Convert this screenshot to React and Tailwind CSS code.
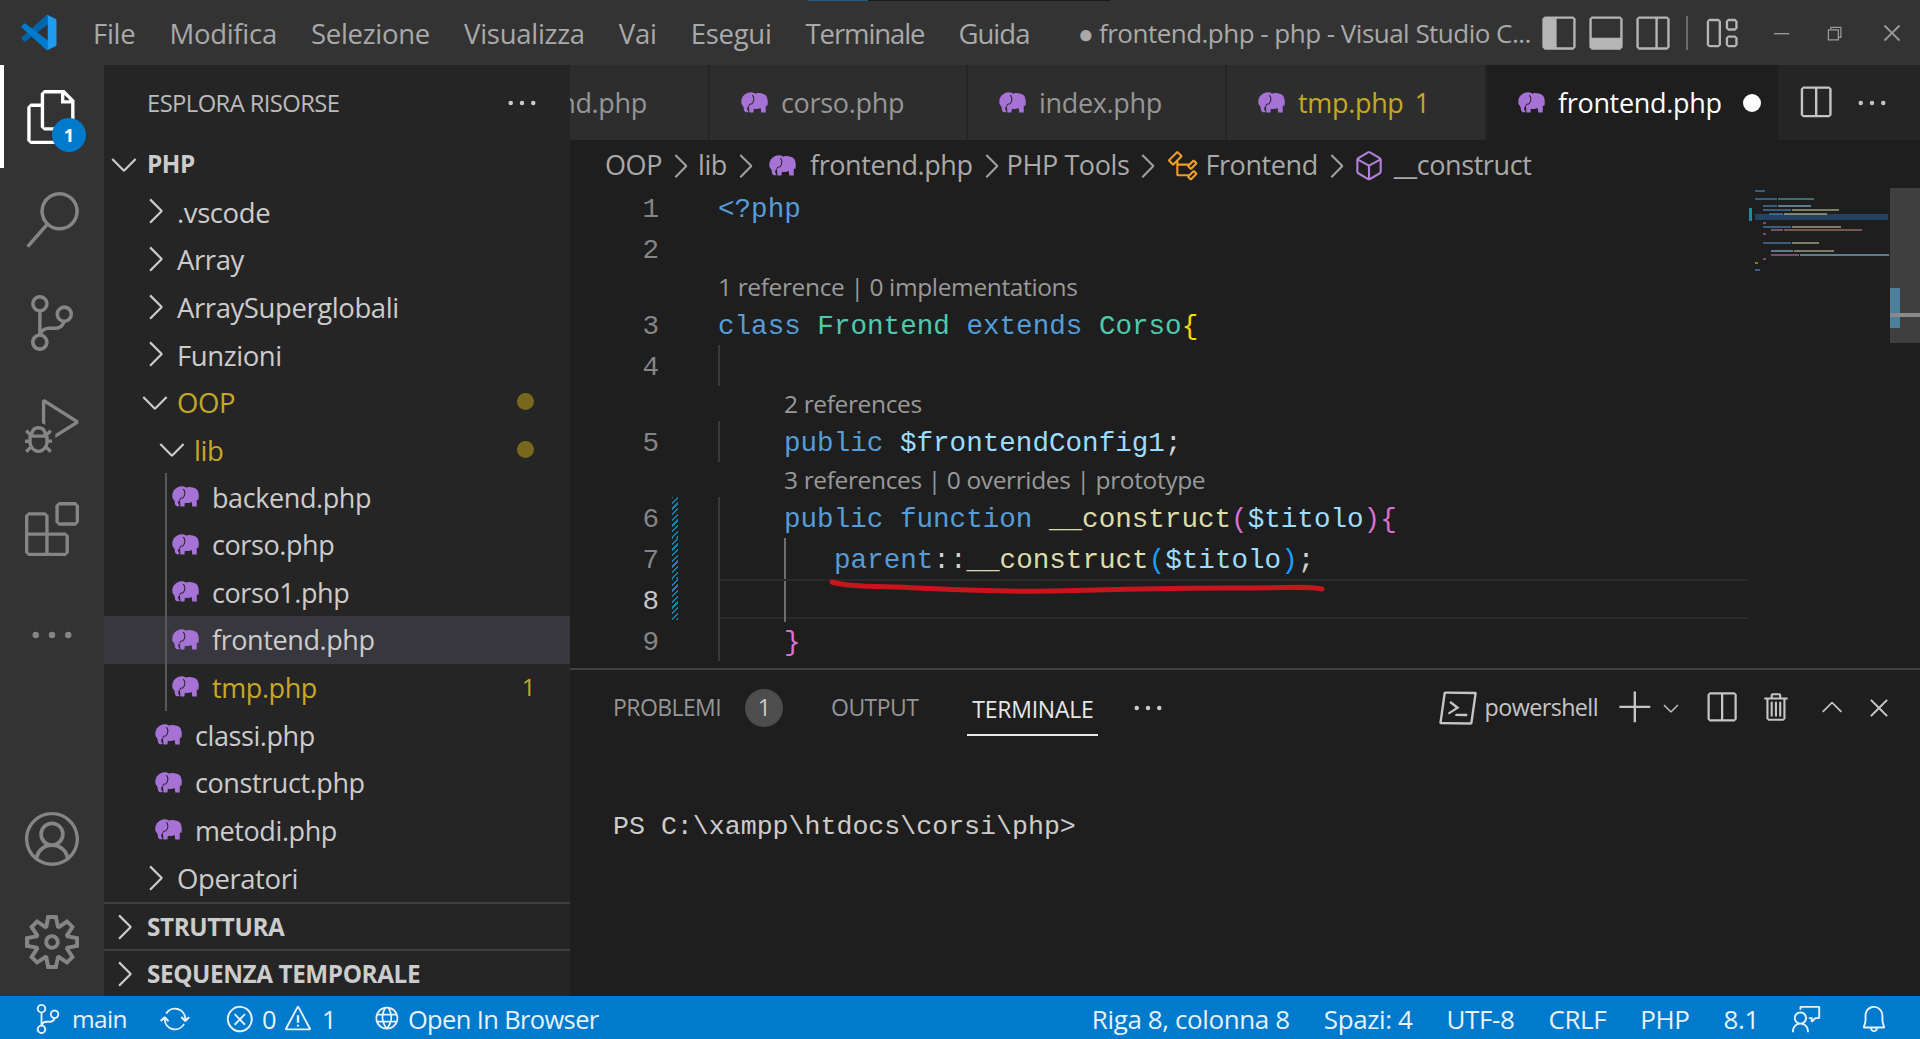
import {
  VscFiles, VscSearch, VscSourceControl, VscDebugAlt, VscExtensions, VscEllipsis, VscAccount, VscSettingsGear,
  VscChevronRight, VscChevronDown, VscSplitHorizontal, VscLayoutSidebarLeft, VscLayoutPanel, VscLayoutSidebarRightOff,
  VscLayout, VscChromeMinimize, VscChromeRestore, VscChromeClose, VscTerminalPowershell, VscAdd, VscTrash, VscChevronUp,
  VscSync, VscError, VscWarning, VscGlobe, VscBell, VscFeedback, VscSymbolClass, VscSymbolMethod,
} from 'react-icons/vsc'

const Elephant = ({ className = 'w-[27px] h-[22px]' }) => (
  <svg viewBox="0 0 24 19" className={className}>
    <path fill="#a672d6" d="M5 .8C8-.5 11-.2 12.5 1.3 14 .3 20 .3 22.5 3.3 24 6 24 9 23.5 12L22 12 22 18 18 18 17.5 14C15.5 15 13 15 11.5 14.5L11 18 7.5 18 7 12C6 13 5.5 13 5.5 15 5.5 16.5 7 16 6.5 17.5 4.5 18.5 2.500 17 2.500 14.5 2.500 12.500 1.500 12 .5 10.500-.5 6 1.500 2.500 5 .8Z" />
    <path fill="none" stroke="#252526" strokeWidth=".9" d="M10 2.500C12 4.500 12 8 9.500 10.500M7 12C7.500 10.500 8.500 10 9.500 10.500" />
  </svg>
)

const Logo = () => (
  <svg viewBox="0 0 100 100" className="w-[36px] h-[35px]">
    <path fill="#0065a9" d="M96.4614 10.7962L75.8569 0.875542C73.4719 -0.272773 70.6217 0.211611 68.75 2.08333L1.29858 63.5832C-0.515693 65.2373 -0.513607 68.0937 1.30308 69.7452L6.81272 74.754C8.29793 76.1042 10.5347 76.2036 12.1338 74.9905L93.3609 13.3699C96.086 11.3026 100 13.2462 100 16.6667V16.4275C100 14.0265 98.6246 11.8378 96.4614 10.7962Z" />
    <path fill="#007acc" d="M96.4614 89.2038L75.8569 99.1245C73.4719 100.273 70.6217 99.7884 68.75 97.9167L1.29858 36.4168C-0.515693 34.7627 -0.513607 31.9063 1.30308 30.2548L6.81272 25.246C8.29793 23.8958 10.5347 23.7964 12.1338 25.0095L93.3609 86.6301C96.086 88.6974 100 86.7538 100 83.3333V83.5725C100 85.9735 98.6246 88.1622 96.4614 89.2038Z" />
    <path fill="#1f9cf0" d="M75.8578 99.1263C73.4721 100.274 70.6219 99.7885 68.75 97.9166C71.0564 100.223 75 98.5895 75 95.3278V4.67213C75 1.41039 71.0564 -0.223106 68.75 2.08329C70.6219 0.211402 73.4721 -0.273666 75.8578 0.873633L96.4587 10.7807C98.6234 11.8217 100 14.0112 100 16.4132V83.5871C100 85.9891 98.6234 88.1786 96.4586 89.2196L75.8578 99.1263Z" />
  </svg>
)

const TitleBar = () => (
  <header className="relative h-[65px] shrink-0 bg-[#333333] flex items-center text-[#a9a9a9]">
    <div className="absolute top-0 left-[808px] h-[1px] w-[60px] bg-[#1f5c8a]" />
    <div className="absolute top-0 left-[868px] h-[1px] w-[242px] bg-[#1a1a1a]" />
    <div className="ml-[21px] mr-[36px] shrink-0"><Logo /></div>
    <nav className="w-[985px] shrink-0 flex gap-[34px] text-[27.5px] tracking-[-0.01em] pt-[2px]">
      <span>File</span>
      <span>Modifica</span>
      <span>Selezione</span>
      <span>Visualizza</span>
      <span>Vai</span>
      <span>Esegui</span>
      <span className="tracking-[-0.04em]">Terminale</span>
      <span className="tracking-[-0.035em]">Guida</span>
    </nav>
    <span className="w-[21px] shrink-0 text-[26px] pt-[2px]">●</span>
    <span className="w-[441px] shrink-0 whitespace-nowrap text-[26px] tracking-[-0.02em] pt-[2px]">frontend.php - php - Visual Studio C...</span>
    <div className="flex items-center text-[#b5b5b5]">
      <VscLayoutSidebarLeft size={38} />
      <VscLayoutPanel size={38} className="ml-[9px]" />
      <VscLayoutSidebarRightOff size={38} className="ml-[9px]" />
      <div className="w-[2px] h-[34px] bg-[#6a6a6a] ml-[14px]" />
      <VscLayout size={38} className="ml-[14px]" />
    </div>
    <div className="flex items-center text-[#9a9a9a] ml-[30px]">
      <VscChromeMinimize size={22} />
      <VscChromeRestore size={20} className="ml-[32px]" />
      <VscChromeClose size={24} className="ml-[36px]" />
    </div>
  </header>
)

const ActivityItem = ({ icon: Icon, size = 52, active, children }) => (
  <div className={`relative h-[103px] flex items-center justify-center ${active ? 'text-white' : 'text-[#858585]'}`}>
    {active && <div className="absolute left-0 top-0 bottom-0 w-[4px] bg-white" />}
    <Icon size={size} />
    {children}
  </div>
)

const ActivityBar = () => (
  <aside className="w-[104px] shrink-0 bg-[#333333] flex flex-col justify-between pb-[3px]">
    <div>
      <ActivityItem icon={VscFiles} size={54} active>
        <span className="absolute left-[52px] top-[53px] w-[34px] h-[34px] rounded-full bg-[#007acc] text-white text-[18px] font-bold flex items-center justify-center">1</span>
      </ActivityItem>
      <ActivityItem icon={VscSearch} size={56} />
      <ActivityItem icon={VscSourceControl} size={56} />
      <ActivityItem icon={VscDebugAlt} size={54} />
      <ActivityItem icon={VscExtensions} size={54} />
      <div className="pt-[3px]"><ActivityItem icon={VscEllipsis} size={52} /></div>
    </div>
    <div>
      <ActivityItem icon={VscAccount} size={54} />
      <ActivityItem icon={VscSettingsGear} size={54} />
    </div>
  </aside>
)

const Row = ({ pl, open, chevron, file, label, yellow, bold, right, selected, guide }) => (
  <div className={`relative h-[47.6px] flex items-center ${selected ? 'bg-[#37373d]' : ''} ${yellow ? 'text-[#c5a826]' : 'text-[#cccccc]'} ${bold ? 'font-bold text-[24.3px]' : ''} ${file ? 'text-[27px]' : ''}`} style={{ paddingLeft: pl }}>
    {guide && <div className="absolute left-[61px] top-0 bottom-0 w-[2px] bg-[#585858]" />}
    {chevron && (open
      ? <VscChevronDown size={40} className="mr-[2px] text-[#cccccc]" />
      : <VscChevronRight size={40} className="mr-[2px] text-[#cccccc]" />)}
    {file && <span className="mr-[13px]"><Elephant /></span>}
    <span className={`whitespace-nowrap ${bold ? 'ml-[1px]' : 'mt-[2px]'}`}>{label}</span>
    {right}
  </div>
)

const Dot = () => <span className="absolute right-[36px] w-[17px] h-[17px] rounded-full bg-[#77681d]" />

const SideBar = () => (
  <aside className="w-[466px] shrink-0 bg-[#252526] flex flex-col text-[27.5px] tracking-[-0.015em]">
    <div className="h-[75px] flex items-center justify-between pl-[43px] pr-[30px] text-[#bbbbbb] text-[23.8px] tracking-[-0.025em]">
      <span className="mt-[2px]">ESPLORA RISORSE</span>
      <VscEllipsis size={36} className="text-[#cccccc]" />
    </div>
    <Row pl={0} chevron open bold label="PHP" />
    <Row pl={31} chevron label=".vscode" />
    <Row pl={31} chevron label="Array" />
    <Row pl={31} chevron label="ArraySuperglobali" />
    <Row pl={31} chevron label="Funzioni" />
    <Row pl={31} chevron open yellow label="OOP" right={<Dot />} />
    <Row pl={48} chevron open yellow label="lib" right={<Dot />} />
    <Row pl={68} file guide label="backend.php" />
    <Row pl={68} file guide label="corso.php" />
    <Row pl={68} file guide label="corso1.php" />
    <Row pl={68} file guide selected label="frontend.php" />
    <Row pl={68} file guide yellow label="tmp.php" right={<span className="absolute right-[35px] text-[24px]">1</span>} />
    <Row pl={51} file label="classi.php" />
    <Row pl={51} file label="construct.php" />
    <Row pl={51} file label="metodi.php" />
    <Row pl={31} chevron label="Operatori" />
    <div className="h-[47px] border-t-2 border-[#3f3f41]">
      <Row pl={0} chevron bold label="STRUTTURA" />
    </div>
    <div className="h-[47px] border-t-2 border-[#3f3f41]">
      <Row pl={0} chevron bold label="SEQUENZA TEMPORALE" />
    </div>
  </aside>
)

const Tab = ({ width, label, yellow, badge, active }) => (
  <div className={`h-full shrink-0 flex items-center pl-[31px] border-r-2 border-[#252526] ${active ? 'bg-[#1e1e1e] text-white' : yellow ? 'bg-[#2d2d2d] text-[#c5a826]' : 'bg-[#2d2d2d] text-[#969696]'}`} style={{ width }}>
    <span className="mr-[13px]"><Elephant /></span>
    <span className="mt-[2px]">{label}</span>
    {badge && <span className="ml-[11px] mt-[2px]">{badge}</span>}
    {active && <span className="ml-[21px] w-[18px] h-[18px] rounded-full bg-white" />}
  </div>
)

const TabBar = () => (
  <div className="h-[75px] shrink-0 flex bg-[#252526] text-[27px] tracking-[-0.012em]">
    <div className="w-[140px] shrink-0 bg-[#2d2d2d] text-[#969696] border-r-2 border-[#252526] flex items-center justify-end pr-[61px] overflow-hidden">
      <span className="shrink-0 mt-[2px]">backend.php</span>
    </div>
    <Tab width={258} label="corso.php" />
    <Tab width={259} label="index.php" />
    <Tab width={260} label="tmp.php" yellow badge="1" />
    <Tab width={293} label="frontend.php" active />
    <div className="flex-1 flex items-center pl-[16px] text-[#c5c5c5]">
      <VscSplitHorizontal size={38} />
      <VscEllipsis size={36} className="ml-[20px]" />
    </div>
  </div>
)

const Chev = () => <VscChevronRight size={38} className="text-[#a0a0a0] -mx-[1px] shrink-0" />

const Breadcrumbs = () => (
  <div className="h-[47px] shrink-0 flex items-center pl-[35px] pt-[4px] text-[#a9a9a9] text-[27px] tracking-[-0.015em] whitespace-nowrap">
    <span>OOP</span><Chev />
    <span>lib</span><Chev />
    <span className="ml-[6px] mr-[14px]"><Elephant /></span>
    <span>frontend.php</span><Chev />
    <span className="-ml-[2px]">PHP Tools</span><Chev />
    <VscSymbolClass size={34} className="text-[#ee9d28] mx-[1px]" />
    <span className="ml-[4px]">Frontend</span><Chev />
    <VscSymbolMethod size={34} className="text-[#b180d7] -ml-[2px] mr-[2px]" />
    <span className="ml-[6px]">__construct</span>
  </div>
)

const kw = 'text-[#569cd6]'
const cl = 'text-[#4ec9b0]'
const va = 'text-[#9cdcfe]'
const fn = 'text-[#dcdcaa]'
const pu = 'text-[#d4d4d4]'
const go = 'text-[#ffd700]'
const pk = 'text-[#da70d6]'
const bl = 'text-[#179fff]'

const Lens = ({ pad, children }) => (
  <div className="h-[35px] flex items-center text-[24.5px] text-[#999999] font-['Open_Sans'] tracking-[-0.015em] whitespace-nowrap" style={{ paddingLeft: pad }}>
    {children}
  </div>
)

const Line = ({ n, mod, active, guide, children }) => (
  <div className="h-[41px] flex">
    <div className={`w-[89px] text-right ${active ? 'text-[#c6c6c6]' : 'text-[#858585]'}`}>{n}</div>
    <div className={`w-[6px] ml-[13px] ${mod ? "bg-[repeating-linear-gradient(-45deg,#1b81a8,#1b81a8_1.5px,transparent_1.5px,transparent_4px)]" : ''}`} />
    <div className="w-[40px] shrink-0" />
    <div className={`flex-1 whitespace-pre ${guide ? 'border-l-2 border-[#3a3a3a]' : ''}`}>{children}</div>
  </div>
)

const t = (c, s) => <span className={c}>{s}</span>

const CodeEditor = () => (
  <div className="flex-1 min-w-0 relative font-['Liberation_Mono'] text-[27.6px] leading-[45px]">
    <Line n="1">{t(kw, '<?php')}</Line>
    <Line n="2" />
    <Lens pad={148}>1 reference | 0 implementations</Lens>
    <Line n="3">{t(kw, 'class ')}{t(cl, 'Frontend ')}{t(kw, 'extends ')}{t(cl, 'Corso')}{t(go, '{')}</Line>
    <Line n="4" guide />
    <Lens pad={214}>2 references</Lens>
    <Line n="5" guide>
      <div className="pl-[64px]">{t(kw, 'public ')}{t(va, '$frontendConfig1')}{t(pu, ';')}</div>
    </Line>
    <Lens pad={214}>3 references | 0 overrides | prototype</Lens>
    <Line n="6" mod guide>
      <div className="pl-[64px]">{t(kw, 'public function ')}{t(fn, '__construct')}{t(pk, '(')}{t(va, '$titolo')}{t(pk, '){')}</div>
    </Line>
    <Line n="7" mod guide>
      <div className="ml-[64px] h-full border-l-2 border-[#6e6e6e] pl-[48px]">
        {t(kw, 'parent')}{t(pu, '::')}{t(fn, '__construct')}{t(bl, '(')}{t(va, '$titolo')}{t(bl, ')')}{t(pu, ';')}
      </div>
    </Line>
    <Line n="8" mod active guide>
      <div className="h-[40px] border-y-2 border-[#2a2a2a]">
        <div className="ml-[64px] h-[41px] border-l-2 border-[#6e6e6e]" />
      </div>
    </Line>
    <Line n="9" guide>
      <div className="pl-[64px]">{t(pk, '}')}</div>
    </Line>
    <svg className="absolute left-[258px] top-[390px] w-[500px] h-[20px]" viewBox="0 0 500 20">
      <path d="M4 5C20 10 50 9 90 11S160 15 220 14 330 11 400 11 480 9 494 12" fill="none" stroke="#c8141c" strokeWidth="5" strokeLinecap="round" />
    </svg>
  </div>
)

// y, x, first segment width and colour, second segment width and colour
const miniRows = [
  [3, 7, 10, '#569cd6', 0, ''],
  [11, 7, 22, '#569cd6', 36, '#4ec9b0'],
  [18, 15, 14, '#569cd6', 33, '#9cdcfe'],
  [22, 15, 28, '#569cd6', 47, '#dcdcaa'],
  [26, 21, 14, '#569cd6', 43, '#dcdcaa'],
  [35, 15, 3, '#da70d6', 0, ''],
  [39, 15, 28, '#569cd6', 49, '#dcdcaa'],
  [42, 23, 12, '#c586c0', 78, '#ce9178'],
  [46, 15, 3, '#da70d6', 0, ''],
  [55, 15, 28, '#569cd6', 27, '#dcdcaa'],
  [63, 23, 22, '#9cdcfe', 40, '#dcdcaa'],
  [67, 23, 28, '#c586c0', 89, '#9cdcfe'],
  [71, 15, 3, '#da70d6', 0, ''],
  [75, 7, 3, '#ffd700', 0, ''],
  [82, 7, 5, '#569cd6', 0, ''],
]

const Minimap = () => (
  <div className="w-[172px] shrink-0 relative">
    <svg className="w-[142px] h-[130px] absolute left-0 top-0" viewBox="0 0 142 130">
      <rect x="1" y="21" width="3" height="13" fill="#1c8aa0" />
      <rect x="7" y="27" width="133" height="6" fill="#264f78" opacity=".75" />
      {miniRows.map(([y, x, w1, c1, w2, c2]) => (
        <g key={y} opacity=".5">
          <rect x={x} y={y} width={w1} height="2" fill={c1} />
          {w2 > 0 && <rect x={x + w1 + 1} y={y} width={w2} height="2" fill={c2} />}
        </g>
      ))}
    </svg>
    <div className="absolute right-0 top-[1px] w-[30px] h-[155px] bg-[#3f3f3f]" />
    <div className="absolute right-[20px] top-[101px] w-[10px] h-[40px] bg-[#4b7f9c]" />
    <div className="absolute right-0 top-[126px] w-[30px] h-[4px] bg-[#8a8a8a]" />
  </div>
)

const Panel = () => (
  <section className="flex-1 min-h-0 border-t-2 border-[#414141] flex flex-col">
    <div className="h-[75px] shrink-0 flex items-center pl-[43px] text-[#969696] text-[23px] tracking-[-0.025em] whitespace-nowrap">
      <span>PROBLEMI</span>
      <span className="ml-[24px] w-[38px] h-[38px] rounded-full bg-[#4d4d4d] text-[#cccccc] flex items-center justify-center">1</span>
      <span className="ml-[48px]">OUTPUT</span>
      <span className="ml-[54px] h-[40px] relative text-[#e7e7e7] leading-[40px] mt-[2px] tracking-[-0.01em]">
        TERMINALE
        <span className="absolute -left-[5px] -right-[4px] bottom-[-7px] h-[2px] bg-[#e7e7e7]" />
      </span>
      <VscEllipsis size={36} className="ml-[36px] text-[#cccccc]" />
      <div className="ml-auto flex items-center text-[#c5c5c5] pr-[28px]">
        <VscTerminalPowershell size={38} className="mr-[8px]" />
        <span className="text-[23.3px] mr-[19px]">powershell</span>
        <VscAdd size={38} />
        <VscChevronDown size={24} className="ml-[4px]" />
        <VscSplitHorizontal size={36} className="ml-[20px]" />
        <VscTrash size={34} className="ml-[21px]" />
        <VscChevronUp size={32} className="ml-[22px]" />
        <VscChromeClose size={26} className="ml-[18px]" />
      </div>
    </div>
    <div className="pl-[43px] mt-[63px] font-['Liberation_Mono'] text-[26.6px] text-[#cccccc]">PS C:\xampp\htdocs\corsi\php&gt;</div>
  </section>
)

const StatusBar = () => (
  <footer className="h-[43px] shrink-0 bg-[#007acc] text-[#e8f2fa] flex items-center justify-between pl-[33px] pr-[31px] pt-[3px] whitespace-nowrap">
    <div className="flex items-center text-[25.5px] tracking-[-0.025em]">
      <VscSourceControl size={30} className="mr-[9px]" />
      <span className="text-[24.5px]">main</span>
      <VscSync size={30} className="ml-[33px]" />
      <VscError size={30} className="ml-[35px]" />
      <span className="ml-[7px]">0</span>
      <VscWarning size={30} className="ml-[7px]" />
      <span className="ml-[9px]">1</span>
      <VscGlobe size={28} className="ml-[36px]" />
      <span className="ml-[8px]">Open In Browser</span>
    </div>
    <div className="flex items-center text-[26px] tracking-[-0.015em]">
      <span>Riga 8, colonna 8</span>
      <span className="ml-[34px]">Spazi: 4</span>
      <span className="ml-[34px]">UTF-8</span>
      <span className="ml-[34px]">CRLF</span>
      <span className="ml-[34px]">PHP</span>
      <span className="ml-[34px]">8.1</span>
      <VscFeedback size={30} className="ml-[33px]" />
      <VscBell size={30} className="ml-[37px]" />
    </div>
  </footer>
)

export default function App() {
  return (
    <div className="w-screen h-screen overflow-hidden flex flex-col bg-[#1e1e1e] font-['Open_Sans',sans-serif]">
      <TitleBar />
      <div className="flex-1 min-h-0 flex">
        <ActivityBar />
        <SideBar />
        <main className="flex-1 min-w-0 flex flex-col">
          <TabBar />
          <Breadcrumbs />
          <div className="h-[481px] shrink-0 flex overflow-hidden">
            <CodeEditor />
            <Minimap />
          </div>
          <Panel />
        </main>
      </div>
      <StatusBar />
    </div>
  )
}
